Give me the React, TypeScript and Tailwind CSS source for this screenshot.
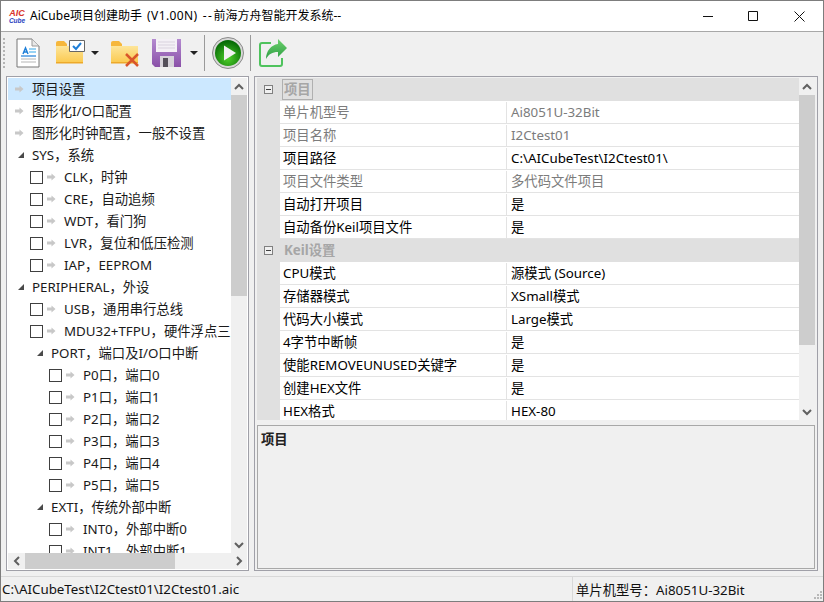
import React from "react";

const FONT = "[font-family:'Noto_Sans','Noto_Sans_CJK_SC',sans-serif] text-[13.33px] leading-none";

function Arrow() {
  return (
    <svg width="9" height="8" viewBox="0 0 9 8" className="shrink-0">
      <path d="M0 2.500h4.500V0.500L8.500 4 4.500 7.500V5.500H0z" fill="#c8c8c8" />
    </svg>
  );
}

function Tri() {
  return (
    <svg width="6" height="6" viewBox="0 0 6 6" className="shrink-0">
      <path d="M6 0V6H0z" fill="#4a4a4a" />
    </svg>
  );
}

function Check() {
  return <span className="block w-[13px] h-[13px] shrink-0 border border-[#404040] bg-white" />;
}

function LeafTop({ t, active }: { t: string; active?: boolean }) {
  return (
    <div className={`h-[22px] shrink-0 flex items-center pl-[7px] whitespace-nowrap ${active ? "bg-[#cce8ff]" : ""}`}>
      <Arrow />
      <span className="ml-[8px] pt-[1px]">{t}</span>
    </div>
  );
}

function GroupTop({ t }: { t: string }) {
  return (
    <div className="h-[22px] shrink-0 flex items-center pl-[10px] whitespace-nowrap">
      <Tri />
      <span className="ml-[8px] pt-[1px]">{t}</span>
    </div>
  );
}

function Item1({ t }: { t: string }) {
  return (
    <div className="h-[22px] shrink-0 flex items-center pl-[22px] whitespace-nowrap">
      <Check />
      <span className="ml-[4px]"><Arrow /></span>
      <span className="ml-[8px] pt-[1px]">{t}</span>
    </div>
  );
}

function Group1({ t }: { t: string }) {
  return (
    <div className="h-[22px] shrink-0 flex items-center pl-[29px] whitespace-nowrap">
      <Tri />
      <span className="ml-[8px] pt-[1px]">{t}</span>
    </div>
  );
}

function Item2({ t }: { t: string }) {
  return (
    <div className="h-[22px] shrink-0 flex items-center pl-[41px] whitespace-nowrap">
      <Check />
      <span className="ml-[4px]"><Arrow /></span>
      <span className="ml-[8px] pt-[1px]">{t}</span>
    </div>
  );
}

function Chevron({ d }: { d: "up" | "down" | "left" | "right" }) {
  const p = {
    up: "M1 6 5 2 9 6",
    down: "M1 2 5 6 9 2",
    left: "M6 1 2 5 6 9",
    right: "M2 1 6 5 2 9",
  }[d];
  const vert = d === "up" || d === "down";
  return (
    <svg width={vert ? 10 : 8} height={vert ? 8 : 10} viewBox={vert ? "0 0 10 8" : "0 0 8 10"}>
      <path d={p} fill="none" stroke="#606060" strokeWidth="2" />
    </svg>
  );
}

function Row({ n, v, dim }: { n: string; v: string; dim?: boolean }) {
  return (
    <div className={`h-[23px] shrink-0 flex border-b border-[#e3e3e3] bg-white pt-[1px] ${dim ? "text-[#7c7c7c]" : "text-black"}`}>
      <div className="w-[227px] shrink-0 pl-[3px] flex items-center border-r border-[#e3e3e3] whitespace-nowrap">{n}</div>
      <div className="flex-1 pl-[4px] flex items-center whitespace-nowrap">{v}</div>
    </div>
  );
}

function GroupRow({ t, focus }: { t: string; focus?: boolean }) {
  return (
    <div className="h-[23px] shrink-0 flex items-center bg-[#e0e0e0] font-bold text-[#a6a6a6]">
      <span className="ml-[7px] w-[9px] h-[9px] border border-[#808080] flex items-center justify-center shrink-0 bg-[#f0f0f0]">
        <span className="block w-[5px] h-px bg-[#404040]" />
      </span>
      <span className={`ml-[9px] h-[21px] flex items-center pt-[1px] ${focus ? "border border-[#b0b0b0] px-[1px]" : "pl-[2px]"}`}>{t}</span>
    </div>
  );
}

function Caret() {
  return <span className="block w-0 h-0 border-x-[4px] border-x-transparent border-t-[4px] border-t-[#222]" />;
}

function DocIcon() {
  return (
    <svg width="24" height="30" viewBox="0 0 24 30">
      <path d="M1 1h15l7 7v21H1z" fill="#fff" stroke="#777" />
      <path d="M16 1v7h7" fill="#e8e8e8" stroke="#999" />
      <path d="M7 16l2.500-6 2.500 6M8 14h3" fill="none" stroke="#1f7fd8" strokeWidth="1.500" />
      <path d="M13 11h7M13 14h7" stroke="#35a8ea" strokeWidth="1.200" />
      <path d="M5 18h15" stroke="#1f7fd8" strokeWidth="1.200" />
      <path d="M5 21h15M5 24h15" stroke="#b5b5b5" strokeWidth="1.200" />
    </svg>
  );
}

function Folder() {
  return (
    <svg width="31" height="30" viewBox="0 0 31 30">
      <defs>
        <linearGradient id="fg" x1="0" y1="0" x2="0" y2="1">
          <stop offset="0" stopColor="#fde59a" />
          <stop offset="1" stopColor="#fbc94e" />
        </linearGradient>
      </defs>
      <path d="M1 4.500Q1 3 3 3h6l3 3v2H1z" fill="#f6b73c" />
      <path d="M1 8h27v17H1z" fill="url(#fg)" />
      <path d="M1 24h27v1.500H1z" fill="#eda92a" />
    </svg>
  );
}

function ShareIcon() {
  return (
    <svg width="30" height="30" viewBox="0 0 30 30">
      <defs>
        <linearGradient id="shg" x1="0" y1="0" x2="0" y2="1">
          <stop offset="0" stopColor="#6bd06b" />
          <stop offset="1" stopColor="#2f9e45" />
        </linearGradient>
      </defs>
      <path d="M13 5H4Q2 5 2 7v19q0 2 2 2h18q2 0 2-2v-6" fill="none" stroke="#4fc35d" strokeWidth="2" />
      <path d="M20 1l9 9-9 9v-5c-6 0-9 2-12 7 0-8 5-14 12-15z" fill="url(#shg)" />
    </svg>
  );
}

function PlayIcon() {
  return (
    <svg width="32" height="32" viewBox="0 0 32 32">
      <defs>
        <radialGradient id="pg" cx="50%" cy="70%" r="65%">
          <stop offset="0" stopColor="#4fd02a" />
          <stop offset="1" stopColor="#066b06" />
        </radialGradient>
      </defs>
      <circle cx="16" cy="16" r="15.500" fill="#d8d8d8" stroke="#8a8a8a" />
      <circle cx="16" cy="16" r="13" fill="url(#pg)" />
      <path d="M12 8.500 24 16 12 23.500z" fill="#f2f2f2" />
    </svg>
  );
}

function SaveIcon() {
  return (
    <svg width="30" height="30" viewBox="0 0 30 30">
      <defs>
        <linearGradient id="sg" x1="0" y1="0" x2="0" y2="1">
          <stop offset="0" stopColor="#b48ad0" />
          <stop offset="1" stopColor="#8a50a8" />
        </linearGradient>
      </defs>
      <path d="M0 1h29v28H3l-3-3z" fill="url(#sg)" />
      <path d="M4 1h21v13H4z" fill="#f4f0f6" />
      <path d="M6 4h17M6 7h17M6 10h17" stroke="#d9d2de" />
      <path d="M8 18h14v11H8z" fill="#d7d3da" />
      <path d="M11 20h5v9h-5z" fill="#55505a" />
    </svg>
  );
}

function HScrollBar() {
  return (
    <div className="h-[16px] shrink-0 flex items-center bg-[#f0f0f0]">
      <div className="w-[17px] flex justify-center shrink-0"><Chevron d="left" /></div>
      <div className="w-[150px] h-full bg-[#cdcdcd] shrink-0" />
      <div className="flex-1" />
      <div className="w-[17px] flex justify-center shrink-0"><Chevron d="right" /></div>
    </div>
  );
}

export default function App() {
  return (
    <div className={`${FONT} w-[824px] h-[602px] flex flex-col border border-[#7d7d7d] bg-[#f0f0f0] text-[#111] overflow-hidden`}>
      {/* title bar */}
      <div className="h-[31px] shrink-0 bg-white flex items-center border-b border-[#a8a8a8]">
        <div className="w-[18px] ml-[7px] shrink-0 flex flex-col items-center font-bold italic [font-family:'Liberation_Sans',sans-serif]">
          <span className="text-[9px] leading-[9px] text-[#d8342c]">AIC</span>
          <span className="text-[6.5px] leading-[6px] text-[#2a3fc0]">Cube</span>
        </div>
        <span className="ml-[4px] whitespace-nowrap text-[12px] text-black">
          AiCube项目创建助手
          <span className="[word-spacing:2px]"> <span className="tracking-[0.4px]">(V1.00N)</span> </span>
          <span className="tracking-[1.5px]">--</span>
          前海方舟智能开发系统--
        </span>
        <div className="ml-auto flex items-center mr-[18px]">
          <svg width="11" height="11" viewBox="0 0 11 11" className="mr-[34px]"><path d="M0 5.500h10" stroke="#111" /></svg>
          <svg width="11" height="11" viewBox="0 0 11 11" className="mr-[35px]"><path d="M.5.500h9v9h-9z" fill="none" stroke="#111" /></svg>
          <svg width="11" height="11" viewBox="0 0 11 11"><path d="M.5.500l10 10M10.500.500l-10 10" stroke="#111" /></svg>
        </div>
      </div>

      {/* toolbar */}
      <div className="h-[44px] shrink-0 flex items-center pb-[2px]">
        <div className="ml-[2px] w-[3px] h-[30px] flex flex-col justify-between shrink-0">
          {[0, 1, 2, 3, 4, 5, 6, 7].map((i) => (
            <span key={i} className="block w-[2px] h-[2px] bg-[#b4b4b4]" />
          ))}
        </div>
        <div className="ml-[10px] shrink-0 flex"><DocIcon /></div>
        <div className="ml-[15px] relative w-[31px] h-[30px] shrink-0">
          <Folder />
          <svg width="17" height="13" viewBox="0 0 17 13" className="absolute left-[14px] top-[2px]">
            <path d="M.5.500h15v11H.5z" fill="#fff" stroke="#666" />
            <path d="M4 6l3 3 5-6" fill="none" stroke="#1f7fd8" strokeWidth="2" />
          </svg>
        </div>
        <div className="ml-[5px] shrink-0"><Caret /></div>
        <div className="ml-[11px] relative w-[31px] h-[30px] shrink-0">
          <Folder />
          <svg width="16" height="16" viewBox="0 0 16 16" className="absolute left-[14px] top-[14px]">
            <path d="M2 2l12 12M14 2 2 14" stroke="#d9562a" strokeWidth="2.500" />
          </svg>
        </div>
        <div className="ml-[11px] shrink-0 flex"><SaveIcon /></div>
        <div className="ml-[8px] shrink-0"><Caret /></div>
        <div className="ml-[6px] w-px h-[36px] bg-[#9a9a9a] shrink-0" />
        <div className="ml-[7px] shrink-0 flex"><PlayIcon /></div>
        <div className="ml-[6px] w-px h-[36px] bg-[#9a9a9a] shrink-0" />
        <div className="ml-[7px] shrink-0 flex"><ShareIcon /></div>
      </div>

      {/* main */}
      <div className="flex-1 min-h-0 flex pl-[5px] pr-[5px] pb-[5px]">
        {/* tree */}
        <div className="w-[243px] shrink-0 border border-[#a0a0a8] flex flex-col bg-white p-px">
          <div className="flex-1 min-h-0 flex">
            <div className="w-[223px] shrink-0 overflow-hidden flex flex-col text-[#1a1a1a]">
              <LeafTop t="项目设置" active />
              <LeafTop t="图形化I/O口配置" />
              <LeafTop t="图形化时钟配置，一般不设置" />
              <GroupTop t="SYS，系统" />
              <Item1 t="CLK，时钟" />
              <Item1 t="CRE，自动追频" />
              <Item1 t="WDT，看门狗" />
              <Item1 t="LVR，复位和低压检测" />
              <Item1 t="IAP，EEPROM" />
              <GroupTop t="PERIPHERAL，外设" />
              <Item1 t="USB，通用串行总线" />
              <Item1 t="MDU32+TFPU，硬件浮点三角函数" />
              <Group1 t="PORT，端口及I/O口中断" />
              <Item2 t="P0口，端口0" />
              <Item2 t="P1口，端口1" />
              <Item2 t="P2口，端口2" />
              <Item2 t="P3口，端口3" />
              <Item2 t="P4口，端口4" />
              <Item2 t="P5口，端口5" />
              <Group1 t="EXTI，传统外部中断" />
              <Item2 t="INT0，外部中断0" />
              <Item2 t="INT1，外部中断1" />
            </div>
            <div className="flex-1 flex flex-col bg-[#f0f0f0]">
              <div className="h-[17px] flex items-center justify-center shrink-0"><Chevron d="up" /></div>
              <div className="h-[201px] bg-[#cdcdcd] shrink-0" />
              <div className="flex-1" />
              <div className="h-[17px] flex items-center justify-center shrink-0"><Chevron d="down" /></div>
            </div>
          </div>
          <HScrollBar />
        </div>

        <div className="w-[5px] shrink-0" />

        {/* right */}
        <div className="flex-1 min-w-0 flex flex-col border border-[#a0a0a8] p-px gap-[5px]">
          <div className="h-[342px] shrink-0 flex ml-[1px] mr-[1px]">
            <div className="flex-1 min-w-0 flex flex-col overflow-hidden bg-[#e0e0e0]">
              <GroupRow t="项目" focus />
              <div className="flex flex-col pl-[23px]">
                <Row n="单片机型号" v="Ai8051U-32Bit" dim />
                <Row n="项目名称" v="I2Ctest01" dim />
                <Row n="项目路径" v="C:\AICubeTest\I2Ctest01\" />
                <Row n="项目文件类型" v="多代码文件项目" dim />
                <Row n="自动打开项目" v="是" />
                <Row n="自动备份Keil项目文件" v="是" />
              </div>
              <GroupRow t="Keil设置" />
              <div className="flex flex-col pl-[23px]">
                <Row n="CPU模式" v="源模式 (Source)" />
                <Row n="存储器模式" v="XSmall模式" />
                <Row n="代码大小模式" v="Large模式" />
                <Row n="4字节中断帧" v="是" />
                <Row n="使能REMOVEUNUSED关键字" v="是" />
                <Row n="创建HEX文件" v="是" />
                <Row n="HEX格式" v="HEX-80" />
              </div>
            </div>
            <div className="w-[16px] shrink-0 flex flex-col bg-[#f0f0f0]">
              <div className="h-[17px] flex items-center justify-center shrink-0"><Chevron d="up" /></div>
              <div className="h-[250px] bg-[#cdcdcd] shrink-0" />
              <div className="flex-1" />
              <div className="h-[17px] flex items-center justify-center shrink-0"><Chevron d="down" /></div>
            </div>
          </div>
          <div className="flex-1 min-h-0 ml-[1px] mr-[1px] border border-[#a8a8a8] bg-[#f0f0f0] px-[3px] pt-[7px]">
            <span className="font-bold text-[#222]">项目</span>
          </div>
        </div>
      </div>

      {/* status */}
      <div className="h-[25px] shrink-0 flex items-center border-t border-[#d8d8d8] relative pt-[1px]">
        <span className="ml-[1px] whitespace-nowrap">C:\AICubeTest\I2Ctest01\I2Ctest01.aic</span>
        <div className="absolute left-[571px] top-0 bottom-0 w-px bg-[#d8d8d8]" />
        <span className="absolute left-[575px] top-[7px] whitespace-nowrap">单片机型号：Ai8051U-32Bit</span>
        <svg width="10" height="10" viewBox="0 0 10 10" className="absolute right-0 bottom-[1px]">
          <path d="M7 1h2v2H7zM4 4h2v2H4zM7 4h2v2H7zM1 7h2v2H1zM4 7h2v2H4zM7 7h2v2H7z" fill="#b8b8b8" />
        </svg>
      </div>
    </div>
  );
}
